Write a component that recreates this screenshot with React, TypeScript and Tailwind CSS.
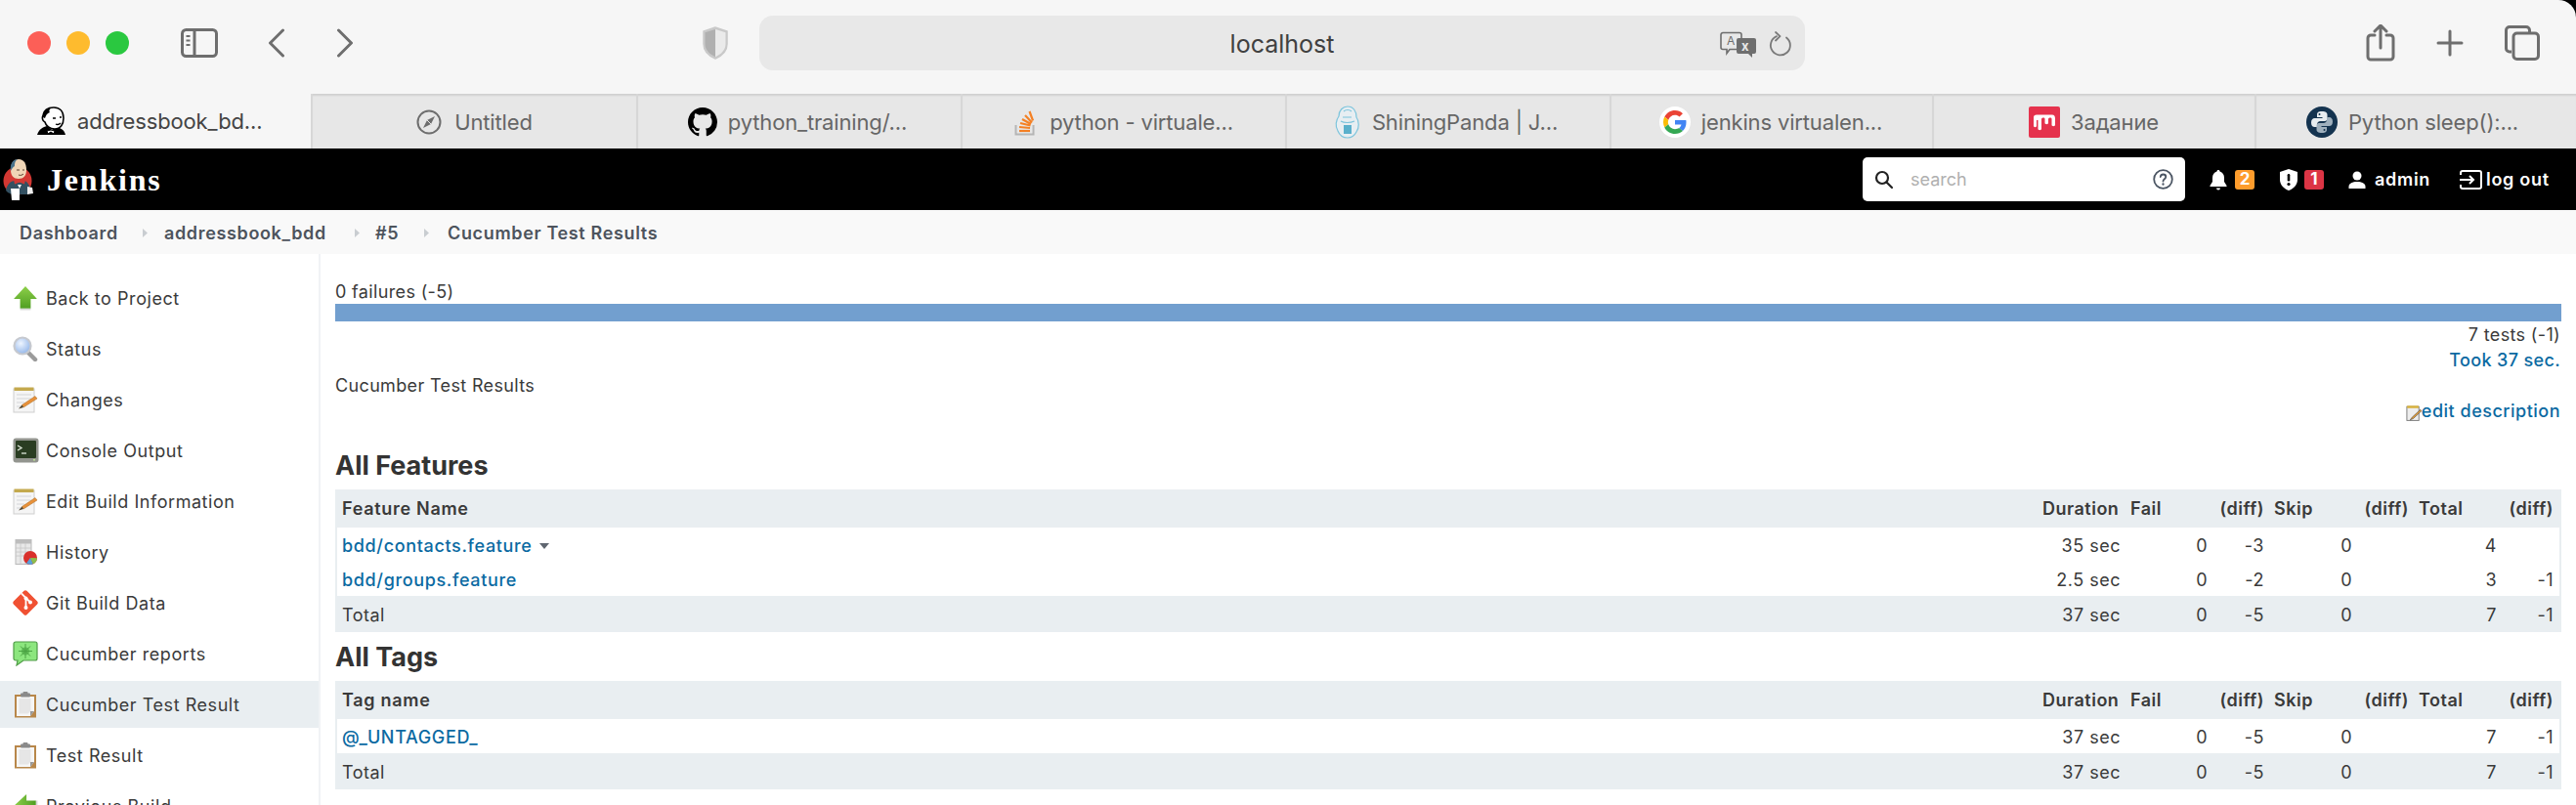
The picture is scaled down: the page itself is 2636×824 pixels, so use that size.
import React from "react";

const Lights = () => (
  <div className="flex gap-[16px] ml-[28px]">
    <span className="w-[24px] h-[24px] rounded-full bg-[#fc5f57]" />
    <span className="w-[24px] h-[24px] rounded-full bg-[#febb2e]" />
    <span className="w-[24px] h-[24px] rounded-full bg-[#2ac840]" />
  </div>
);

const SidebarToggle = () => (
  <svg width="38" height="30" viewBox="0 0 38 30" fill="none" stroke="#6e6e6e" strokeWidth="3" className="ml-[53px]">
    <rect x="1.5" y="1.5" width="35" height="27" rx="4" />
    <path d="M14 2v26" />
    <path d="M5.5 8h4M5.5 12.5h4M5.5 17h4" strokeWidth="2" />
  </svg>
);

const Chevron = ({ dir, cls }: { dir: "l" | "r"; cls: string }) => (
  <svg width="18" height="30" viewBox="0 0 18 30" fill="none" stroke="#6e6e6e" strokeWidth="3" strokeLinecap="round" strokeLinejoin="round" className={cls}>
    <path d={dir === "l" ? "M15.5 2 2.5 15l13 13" : "M2.5 2l13 13-13 13"} />
  </svg>
);

const Shield = () => (
  <svg width="28" height="34" viewBox="0 0 28 34" className="ml-[356px]">
    <path d="M14 1 2 5v13c0 7 5 12 12 15 7-3 12-8 12-15V5z" fill="#c9c9c9" stroke="#c9c9c9" strokeWidth="1.5" />
    <path d="M14 3 3.5 6.2V18c0 6 4.5 10.5 10.5 13.2z" fill="#b0b0b0" />
    <path d="M14 3 24.5 6.2V18c0 6-4.5 10.5-10.5 13.2z" fill="#eaeaea" />
  </svg>
);

const Translate = () => (
  <svg width="38" height="28" viewBox="0 0 38 28" className="absolute left-[983px] top-[16px]">
    <path d="M3 1.500h17a2 2 0 0 1 2 2v13a2 2 0 0 1-2 2H10l-3 4v-4H3a2 2 0 0 1-2-2v-13a2 2 0 0 1 2-2z" fill="#e8e8e8" stroke="#6e6e6e" strokeWidth="1.600" />
    <text x="7" y="14" fontSize="12" fill="#6e6e6e" fontFamily="Inter, sans-serif">A</text>
    <path d="M19 7h16a2 2 0 0 1 2 2v12a2 2 0 0 1-2 2h-2v4l-4-4h-10a2 2 0 0 1-2-2V9a2 2 0 0 1 2-2z" fill="#6e6e6e" />
    <text x="22" y="20" fontSize="13" fontWeight="700" fill="#e8e8e8" fontFamily="Inter, sans-serif">x</text>
  </svg>
);

const Reload = () => (
  <svg width="24" height="26" viewBox="0 0 24 26" fill="none" stroke="#7a7a7a" strokeWidth="1.800" strokeLinecap="round" strokeLinejoin="round" className="absolute left-[1032px] top-[16px]">
    <path d="M9 5.200A10 10 0 1 0 19 6.500" />
    <path d="M8 1l4.500 4.200L8 9.500" />
  </svg>
);

const ShareIcon = () => (
  <svg width="30" height="38" viewBox="0 0 30 38" fill="none" stroke="#6e6e6e" strokeWidth="3" strokeLinecap="round" strokeLinejoin="round" className="ml-[574px]">
    <path d="M9 11H5a3 3 0 0 0-3 3v19a3 3 0 0 0 3 3h20a3 3 0 0 0 3-3V14a3 3 0 0 0-3-3h-4" />
    <path d="M15 24V2M9 7l6-6 6 6" />
  </svg>
);

const PlusIcon = () => (
  <svg width="28" height="28" viewBox="0 0 28 28" stroke="#6e6e6e" strokeWidth="3" strokeLinecap="round" className="ml-[42px]">
    <path d="M14 2v24M2 14h24" />
  </svg>
);

const TabsIcon = () => (
  <svg width="36" height="36" viewBox="0 0 36 36" fill="none" stroke="#6e6e6e" strokeWidth="3" className="ml-[42px]">
    <path d="M7 27H5a3.500 3.500 0 0 1-3.500-3.500V5A3.500 3.500 0 0 1 5 1.500h17A3.500 3.500 0 0 1 25.500 5v2" />
    <rect x="9" y="8" width="25.500" height="26.500" rx="3.500" />
  </svg>
);

const Butler = () => (
  <svg width="30" height="30" viewBox="0 0 30 30">
    <path d="M0 29c2-6 6-8 10-9l5 4 5-3c4 1 8 3 9 8z" fill="#000" />
    <path d="M14 24l-4 1 1 3 3-2 3 2 1-3z" fill="#fff" stroke="#000" />
    <path d="M6 9C7 3 12 1 17 1c6 0 10 4 10 11 0 6-3 11-9 11-5 0-9-3-10-7-3-1-3-5-2-7z" fill="#fff" stroke="#000" strokeWidth="1.600" />
    <path d="M6 11C6 5 9 2 15 1c-3 2-3 4-2 5-3 1-4 3-5 6z" fill="#000" />
    <path d="M16 12h3M23 11h2M19 18c2 1 4 0 5-1" stroke="#000" strokeWidth="1.300" fill="none" />
  </svg>
);

const Compass = () => (
  <svg width="26" height="26" viewBox="0 0 26 26" fill="none">
    <circle cx="13" cy="13" r="11.500" stroke="#6e6e6e" strokeWidth="2" />
    <path d="M19 7l-8 4-4 8 8-4z" fill="#6e6e6e" />
    <path d="M11 11l4 4" stroke="#e7e7e7" strokeWidth="1" />
  </svg>
);

const Github = () => (
  <svg width="30" height="30" viewBox="0 0 16 16" fill="#000">
    <path d="M8 0C3.580 0 0 3.580 0 8c0 3.540 2.290 6.530 5.470 7.590.4.070.55-.17.55-.38 0-.19-.01-.82-.01-1.490-2.010.37-2.530-.49-2.690-.94-.09-.23-.48-.94-.82-1.130-.28-.15-.68-.52-.01-.53.63-.01 1.080.58 1.230.82.720 1.210 1.870.87 2.330.66.070-.52.280-.87.510-1.070-1.780-.2-3.640-.89-3.640-3.950 0-.87.310-1.590.820-2.150-.08-.2-.36-1.020.08-2.120 0 0 .67-.21 2.200.82.640-.18 1.320-.27 2-.27s1.360.09 2 .27c1.530-1.040 2.200-.82 2.200-.82.440 1.100.160 1.920.08 2.120.51.560.82 1.270.82 2.150 0 3.070-1.870 3.750-3.650 3.950.29.25.54.73.54 1.480 0 1.070-.01 1.930-.01 2.200 0 .21.150.46.550.38A8.010 8.010 0 0 0 16 8c0-4.420-3.580-8-8-8z" />
  </svg>
);

const StackOverflow = () => (
  <svg width="22" height="28" viewBox="0 0 22 28" fill="none">
    <path d="M1.500 17v9.500h18V17" stroke="#b5b5b5" strokeWidth="2" />
    <path d="M5 23h11" stroke="#f48024" strokeWidth="2.200" />
    <path d="M5 19l11 1M6 15l10.500 2.500M8 11l9 5M11 7l7 7.500M15.500 3l3.500 9.500" stroke="#f48024" strokeWidth="2.200" />
  </svg>
);

const PandaButler = () => (
  <svg width="26" height="34" viewBox="0 0 26 34" fill="none" stroke="#7cc4dc" strokeWidth="1.200">
    <path d="M13 1c6 0 9 5 9 11 3 4 3 11 0 15-2 4-5 6-9 6s-8-2-10-7C0 21 1 15 4 11 4 5 8 1 13 1z" fill="#e7eef2" />
    <path d="M8 12h9M9 6c2-2 6-2 8 0M6 16c3 2 10 2 14 0" />
    <rect x="9" y="20" width="8" height="9" fill="#5ab0cc" stroke="none" />
  </svg>
);

const GoogleG = () => (
  <svg width="32" height="32" viewBox="0 0 32 32">
    <circle cx="16" cy="16" r="16" fill="#fff" />
    <g transform="translate(4 4) scale(.5)">
      <path fill="#ea4335" d="M24 9.500c3.500 0 6.600 1.200 9.100 3.600l6.800-6.800C35.800 2.400 30.400 0 24 0 14.600 0 6.500 5.400 2.600 13.200l7.900 6.100C12.400 13.700 17.700 9.500 24 9.500z" />
      <path fill="#4285f4" d="M47 24.500c0-1.600-.1-3.100-.4-4.500H24v9h13c-.6 3-2.300 5.500-4.800 7.200l7.700 6c4.500-4.200 7.100-10.300 7.100-17.700z" />
      <path fill="#fbbc05" d="M10.500 28.700c-.5-1.500-.8-3-.8-4.700s.3-3.200.8-4.700l-7.900-6.100C.9 16.500 0 20.100 0 24s.9 7.500 2.600 10.800z" />
      <path fill="#34a853" d="M24 48c6.500 0 11.900-2.100 15.900-5.800l-7.700-6c-2.100 1.400-4.900 2.300-8.200 2.300-6.300 0-11.600-4.200-13.500-9.800l-7.900 6.100C6.500 42.600 14.600 48 24 48z" />
    </g>
  </svg>
);

const MoodleM = () => (
  <svg width="32" height="32" viewBox="0 0 32 32">
    <rect width="32" height="32" rx="2" fill="#e5324d" />
    <path d="M5 20V11c0-1.500 1-2.500 3-2.500h16c2 0 3 1.500 3 4V19c0 1.500-3.500 1.500-3.500 0v-6c0-1-.5-1.500-1.500-1.500s-2 .5-2 1.500v4c0 1.500-3.500 1.500-3.500 0v-4c0-1-.5-1.500-1.500-1.500s-2 .5-2 1.500v10c0 1.500-3.500 1.500-3.500 0V14H8v6c0 1.500-3 1.500-3 0z" fill="#fff" />
  </svg>
);

const PythonLogo = () => (
  <svg width="32" height="32" viewBox="0 0 32 32">
    <circle cx="16" cy="16" r="16" fill="#14334f" />
    <path d="M16 5c-4 0-5 1.500-5 3.500V11h5.500v1H8.500C6.500 12 5 13.500 5 16.500S6.500 21 8.500 21H11v-2.500c0-2 1.500-3.500 3.500-3.500H19c1.500 0 2.500-1 2.500-2.500V8.500C21.500 6.500 20 5 16 5z" fill="#e8edf0" />
    <path d="M16 27c4 0 5-1.500 5-3.500V21h-5.500v-1h8c2 0 3.500-1.500 3.500-4.500S25.500 11 23.500 11H21v2.500c0 2-1.500 3.500-3.500 3.500H13c-1.500 0-2.500 1-2.500 2.500v4C10.500 25.500 12 27 16 27z" fill="#9fb0bd" />
    <circle cx="13.500" cy="8" r="1" fill="#14334f" />
    <circle cx="18.500" cy="24" r="1" fill="#14334f" />
  </svg>
);

const tabs: { icon: React.ReactNode; label: string; w: string; gap: string; pr: string }[] = [
  { icon: <Compass />, label: "Untitled", w: "w-[333px]", gap: "gap-[13px]", pr: "pr-[0px]" },
  { icon: <Github />, label: "python_training/...", w: "w-[332px]", gap: "gap-[11px]", pr: "pr-[4px]" },
  { icon: <StackOverflow />, label: "python - virtuale...", w: "w-[332px]", gap: "gap-[14px]", pr: "pr-[0px]" },
  { icon: <PandaButler />, label: "ShiningPanda | J...", w: "w-[332px]", gap: "gap-[12px]", pr: "pr-[4px]" },
  { icon: <GoogleG />, label: "jenkins virtualen...", w: "w-[330px]", gap: "gap-[11px]", pr: "pr-[2px]" },
  { icon: <MoodleM />, label: "Задание", w: "w-[330px]", gap: "gap-[11px]", pr: "pr-[1px]" },
  { icon: <PythonLogo />, label: "Python sleep():...", w: "w-[329px]", gap: "gap-[11px]", pr: "pr-[8px]" },
];

const TabBar = () => (
  <div className="flex h-[56px] text-[22px] leading-none tracking-[-0.15px]">
    <div className="w-[318px] bg-[#f6f6f6] flex items-center pl-[38px] gap-[11px] text-[#444]">
      <Butler />
      <span className="whitespace-nowrap">addressbook_bd...</span>
    </div>
    {tabs.map((t) => (
      <div key={t.label} className={`${t.w} ${t.pr} bg-[#e7e7e7] border-l-2 border-[#d7d7d7] shadow-[inset_0_3px_2px_-1px_#d0d0d0] pt-[2px] flex items-center justify-center ${t.gap} text-[#666]`}>
        {t.icon}
        <span className="whitespace-nowrap">{t.label}</span>
      </div>
    ))}
  </div>
);

const JenkinsLogo = () => (
  <svg width="32" height="44" viewBox="0 0 32 44" className="ml-[3px]">
    <circle cx="15" cy="23" r="14.500" fill="#d33833" />
    <path d="M8 12C8 5 11 1 16 1c6 0 8 5 8 11 0 6-3 9-8 9-5 0-8-3-8-9z" fill="#f0d6b7" />
    <path d="M8 13C7 6 10 1 15 1c-3 2-3 5-3 7-2 1-3 3-4 5z" fill="#49728b" />
    <path d="M14 12h3M20 12h2M16 17c2 1 4 0 5-1" stroke="#5a4030" strokeWidth="1" fill="none" />
    <path d="M3 33c1-6 5-10 9-10l5 2 5-2c3 1 5 4 6 8l-2 6H9l-4-2z" fill="#335061" />
    <path d="M11 22l6 2.500 6-2.500-1 4.500-5-2-5 2z" fill="#d33833" />
    <path d="M8 31h9v12H9z" fill="#fff" />
    <path d="M25 29l5 1 1 6-6 1z" fill="#eee" />
    <path d="M15 27l2 4 2-4z" fill="#fff" />
  </svg>
);

const NavBar = () => (
  <div className="h-[63px] bg-black flex items-center text-white">
    <JenkinsLogo />
    <span className="ml-[13px] [font-family:'Liberation_Serif',serif] font-bold text-[32px] tracking-[1.8px] leading-none w-[120px]">Jenkins</span>
    <div className="ml-[1738px] w-[330px] h-[45px] bg-white rounded-[5px] flex items-center pl-[12px] pr-[12px]">
      <svg width="20" height="20" viewBox="0 0 20 20" fill="none" stroke="#222" strokeWidth="2.200" strokeLinecap="round">
        <circle cx="8" cy="8" r="6" />
        <path d="M12.500 12.500 18 18" />
      </svg>
      <span className="ml-[17px] text-[#b0b0b0] text-[18px] flex-1">search</span>
      <svg width="21" height="21" viewBox="0 0 21 21" fill="none" stroke="#4b5563" strokeWidth="1.800" strokeLinecap="round">
        <circle cx="10.500" cy="10.500" r="9.300" />
        <path d="M7.800 8c.2-1.700 1.300-2.500 2.800-2.500s2.700 1 2.700 2.400c0 2.300-2.800 2.300-2.800 4.600" />
        <path d="M10.500 15.300v.4" strokeWidth="2.200" />
      </svg>
    </div>
    <svg width="18" height="22" viewBox="0 0 18 22" fill="#fff" className="ml-[25px]">
      <path d="M9 1c1 0 1.500.7 1.500 1.500C13.500 3.200 15 6 15 9v4l2.500 4v1H.5v-1L3 13V9c0-3 1.500-5.800 4.500-6.500C7.500 1.700 8 1 9 1z" />
      <path d="M7 19.500h4a2 2 0 0 1-4 0z" />
    </svg>
    <span className="ml-[8px] w-[20px] h-[20px] rounded-[3px] bg-[#fe9c2c] flex items-center justify-center text-[17px] font-bold leading-none">2</span>
    <svg width="20" height="22" viewBox="0 0 20 22" className="ml-[25px]">
      <path d="M10 0l9 3v8c0 5-4 9-9 11-5-2-9-6-9-11V3z" fill="#fff" />
      <rect x="8.700" y="5" width="2.600" height="7.500" rx="1.200" fill="#000" />
      <circle cx="10" cy="15.500" r="1.600" fill="#000" />
    </svg>
    <span className="ml-[6px] w-[20px] h-[20px] rounded-[3px] bg-[#dc3545] flex items-center justify-center text-[17px] font-bold leading-none">1</span>
    <svg width="18" height="18" viewBox="0 0 18 18" fill="#fff" className="ml-[25px]">
      <circle cx="9" cy="5" r="4.500" />
      <path d="M.5 18v-2c0-3.500 4-5 8.500-5s8.500 1.500 8.500 5v2z" />
    </svg>
    <span className="ml-[9px] text-[18px] font-semibold tracking-[0.7px] leading-none w-[55px] whitespace-nowrap">admin</span>
    <svg width="23" height="20" viewBox="0 0 23 20" fill="none" stroke="#fff" strokeWidth="2" className="ml-[32px]">
      <path d="M1 5V3a2 2 0 0 1 2-2h17a2 2 0 0 1 2 2v14a2 2 0 0 1-2 2H3a2 2 0 0 1-2-2v-2" />
      <path d="M0 10h14M10 6l4 4-4 4" />
    </svg>
    <span className="ml-[4px] text-[18px] font-semibold tracking-[0.7px] leading-none whitespace-nowrap">log out</span>
  </div>
);

const Sep = ({ cls }: { cls: string }) => (
  <svg width="5" height="9" viewBox="0 0 5 9" className={cls}>
    <path d="M0 0l5 4.500L0 9z" fill="#c9cdd1" />
  </svg>
);

const Breadcrumb = () => (
  <div className="h-[45px] bg-[#f9f9f9] flex items-center pl-[20px] pt-[2px] text-[18px] font-semibold text-[#4d545d] tracking-[0.65px] leading-none whitespace-nowrap">
    <span className="w-[100px]">Dashboard</span>
    <Sep cls="ml-[26px]" />
    <span className="ml-[17px] w-[169px]">addressbook_bdd</span>
    <Sep cls="ml-[26px]" />
    <span className="ml-[16px] w-[24px]">#5</span>
    <Sep cls="ml-[26px]" />
    <span className="ml-[19px]">Cucumber Test Results</span>
  </div>
);

const ArrowIcon = ({ left }: { left?: boolean }) => (
  <svg width="26" height="26" viewBox="0 0 24 24" className={left ? "-rotate-90" : ""}>
    <defs>
      <linearGradient id="ga" x1="0" y1="0" x2="0" y2="1">
        <stop offset="0" stopColor="#8ed04a" />
        <stop offset="1" stopColor="#4f9e22" />
      </linearGradient>
    </defs>
    <path d="M12 1 23 13h-6v9H7v-9H1z" fill="url(#ga)" />
    <path d="M7 22h10v1.500H7z" fill="#d8d8d8" />
  </svg>
);

const Magnifier = () => (
  <svg width="26" height="26" viewBox="0 0 26 26">
    <defs>
      <radialGradient id="gm" cx=".4" cy=".35" r=".7">
        <stop offset="0" stopColor="#eef5ff" />
        <stop offset="1" stopColor="#8fb3e8" />
      </radialGradient>
    </defs>
    <path d="M15 16l8 8" stroke="#9b9b9b" strokeWidth="4.500" strokeLinecap="round" />
    <circle cx="10" cy="10" r="8.500" fill="url(#gm)" stroke="#c6c9cf" strokeWidth="2.200" />
  </svg>
);

const Notepad = () => (
  <svg width="26" height="27" viewBox="0 0 26 27">
    <rect x="1" y="2" width="21" height="24" fill="#f5f5f5" stroke="#cfcfcf" />
    <rect x="1.500" y="0.500" width="20" height="3.500" fill="#c4a94e" />
    <path d="M4 8h15M4 12h15M4 16h8M4 20h5" stroke="#d3d6d9" strokeWidth="1.100" />
    <path d="M23 9.500 9.500 18.500l1.500 2.500L25 12z" fill="#e8913a" stroke="#a9691f" strokeWidth=".5" />
    <path d="M9.500 18.500 6 22.500l5-1.500z" fill="#50452f" />
  </svg>
);

const ConsoleIcon = () => (
  <svg width="27" height="26" viewBox="0 0 27 26">
    <rect x=".5" y=".5" width="26" height="25" rx="3" fill="#93958f" />
    <rect x="3" y="3" width="21" height="18" rx="1" fill="#2a3d22" />
    <path d="M5 8l4 2.500-4 2.500" stroke="#dfe8da" strokeWidth="1.300" fill="none" />
    <path d="M9 16h5" stroke="#dfe8da" strokeWidth="1.300" />
    <rect x="21" y="22" width="2" height="1.500" fill="#b8e08f" />
  </svg>
);

const HistoryIcon = () => (
  <svg width="26" height="26" viewBox="0 0 26 26">
    <rect x="3" y="0.500" width="16" height="25" fill="#e8e8e8" stroke="#b9b9b9" />
    <rect x="3" y="0.500" width="16" height="4" fill="#bdbdbd" />
    <path d="M3 9h16M3 13h16M3 17h16M8 4v21M13 4v21" stroke="#c7c7c7" strokeWidth=".8" />
    <circle cx="18" cy="19" r="7" fill="#d9302b" />
    <path d="M18 19l-4 5.500a7 7 0 0 0 7 .7z" fill="#5aa0d8" />
    <path d="M18 19l3 6.200a7 7 0 0 0 4-6z" fill="#8abf4d" />
  </svg>
);

const GitIcon = () => (
  <svg width="28" height="28" viewBox="0 0 28 28">
    <rect x="4.400" y="4.400" width="19.200" height="19.200" rx="2" fill="#f05133" transform="rotate(45 14 14)" />
    <path d="M10 4.500 14.500 9v9.500M14.500 9 19 13.500" stroke="#fff" strokeWidth="1.800" fill="none" />
    <circle cx="14.500" cy="9.500" r="2" fill="#fff" />
    <circle cx="14.500" cy="19" r="2" fill="#fff" />
    <circle cx="19" cy="13.500" r="2" fill="#fff" />
  </svg>
);

const CucumberIcon = () => (
  <svg width="26" height="26" viewBox="0 0 26 26">
    <path d="M3 1h20a2 2 0 0 1 2 2v15a2 2 0 0 1-2 2H11l-7 5 1-5H3a2 2 0 0 1-2-2V3a2 2 0 0 1 2-2z" fill="#8ce67e" stroke="#4f9c47" strokeWidth="1.200" />
    <circle cx="13" cy="10.500" r="4" fill="#62bd58" />
    <g stroke="#4aa342" strokeWidth="1">
      <path d="M13 3v15M6 10.500h14M8 5.500l10 10M18 5.500l-10 10" />
    </g>
  </svg>
);

const ClipboardIcon = () => (
  <svg width="24" height="27" viewBox="0 0 24 27">
    <rect x="1" y="3" width="22" height="23.500" fill="#b8874a" />
    <path d="M3 5h18v15l-4 5H3z" fill="#f6f6f6" />
    <path d="M5.500 7h12v13l-3 2.500h-9z" fill="#e6e6e6" />
    <path d="M17 25l4-5h-4z" fill="#999" />
    <rect x="7" y="1.500" width="10" height="4" rx="1" fill="#8a8a8a" />
    <rect x="9.500" y="0" width="5" height="3" rx="1" fill="#8a8a8a" />
  </svg>
);

const SideItem = ({ icon, label, active }: { icon: React.ReactNode; label: string; active?: boolean }) => (
  <div className={`h-[48px] shrink-0 flex items-center pl-[12px] ${active ? "bg-[#e9eef1]" : ""}`}>
    <span className="w-[28px] flex justify-center">{icon}</span>
    <span className="ml-[7px] pt-[2px] whitespace-nowrap">{label}</span>
  </div>
);

const Sidebar = () => (
  <aside className="w-[328px] shrink-0 border-r-2 border-[#f1f3f5] pt-[21px] flex flex-col gap-[4px] text-[18px] leading-none tracking-[0.55px] text-[#3a3a3a]">
    <SideItem icon={<ArrowIcon />} label="Back to Project" />
    <SideItem icon={<Magnifier />} label="Status" />
    <SideItem icon={<Notepad />} label="Changes" />
    <SideItem icon={<ConsoleIcon />} label="Console Output" />
    <SideItem icon={<Notepad />} label="Edit Build Information" />
    <SideItem icon={<HistoryIcon />} label="History" />
    <SideItem icon={<GitIcon />} label="Git Build Data" />
    <SideItem icon={<CucumberIcon />} label="Cucumber reports" />
    <SideItem icon={<ClipboardIcon />} label="Cucumber Test Result" active />
    <SideItem icon={<ClipboardIcon />} label="Test Result" />
    <SideItem icon={<ArrowIcon left />} label="Previous Build" />
  </aside>
);

const widths = [1740, 89, 91, 58, 90, 58, 90, 58];

type Row = { name: React.ReactNode; dur: string; fail: string; fd: string; skip: string; sd: string; total: string; td: string };

const Table = ({ head, rows, total }: { head: string; rows: Row[]; total: Row }) => {
  const cells = (r: Row) => (
    <>
      <td className="pl-[5px] pt-[2px]">{r.name}</td>
      <td className="text-right pr-[4px] pt-[2px]">{r.dur}</td>
      <td className="text-right pr-[6px] pt-[2px]">{r.fail}</td>
      <td className="text-right pr-[6px] pt-[2px]">{r.fd}</td>
      <td className="text-right pr-[6px] pt-[2px]">{r.skip}</td>
      <td className="text-right pr-[6px] pt-[2px]">{r.sd}</td>
      <td className="text-right pr-[6px] pt-[2px]">{r.total}</td>
      <td className="text-right pr-[6px] pt-[2px]">{r.td}</td>
    </>
  );
  return (
    <div className="border-x-2 border-[#e9eef1]">
      <table className="w-full table-fixed border-collapse text-[18px] leading-none tracking-[0.5px] text-[#3a3a3a]">
        <colgroup>
          {widths.map((w, i) => (
            <col key={i} style={{ width: w }} />
          ))}
        </colgroup>
        <thead>
          <tr className="h-[39px] bg-[#e9eef1] font-semibold">
            <th className="text-left pl-[5px] pt-[1px] font-semibold tracking-[0.7px]">{head}</th>
            <th className="text-left pl-[5px] pt-[1px] font-semibold">Duration</th>
            <th className="text-left pl-[6px] pt-[1px] font-semibold">Fail</th>
            <th className="text-right pr-[6px] pt-[1px] font-semibold">(diff)</th>
            <th className="text-left pl-[4px] pt-[1px] font-semibold">Skip</th>
            <th className="text-right pr-[6px] pt-[1px] font-semibold">(diff)</th>
            <th className="text-left pl-[4px] pt-[1px] font-semibold">Total</th>
            <th className="text-right pr-[6px] pt-[1px] font-semibold">(diff)</th>
          </tr>
        </thead>
        <tbody>
          {rows.map((r, i) => (
            <tr key={i} className="h-[35px]">
              {cells(r)}
            </tr>
          ))}
          <tr className="h-[37px] bg-[#e9eef1]">{cells(total)}</tr>
        </tbody>
      </table>
    </div>
  );
};

const Lnk = ({ children }: { children: React.ReactNode }) => <a className="text-[#0b6aa2] font-medium tracking-[0.65px]">{children}</a>;

const Content = () => (
  <main className="flex-1 pl-[15px] pr-[15px] text-[18px] text-[#3a3a3a] tracking-[0.35px]">
    <div className="pt-[28px] leading-[22px]">0 failures (-5)</div>
    <div className="mt-[1px] h-[18px] bg-[#729fcf]" />
    <div className="mt-[3px] leading-[22px] text-right pr-[1px]">7 tests (-1)</div>
    <div className="mt-[4px] leading-[22px] text-right pr-[1px]">
      <a className="text-[#0b6aa2] font-medium">Took 37 sec.</a>
    </div>
    <div className="mt-[4px] leading-[22px]">Cucumber Test Results</div>
    <div className="mt-[4px] leading-[22px] flex justify-end pr-[1px] items-end">
      <svg width="16" height="16" viewBox="0 0 26 26" className="mb-[1px]">
        <rect x="1.500" y="2" width="20" height="23" fill="#eee" stroke="#777" strokeWidth="1.500" />
        <rect x="2" y="0.500" width="19" height="4" fill="#d8b23e" />
        <path d="M24 7 10 20l-3 4 5-2L26 9z" fill="#e8a13a" stroke="#444" strokeWidth="1" />
      </svg>
      <a className="text-[#0b6aa2] font-medium tracking-[0.5px]">edit description</a>
    </div>
    <h2 className="mt-[29px] text-[27px] font-bold leading-[32px] tracking-normal text-[#333]">All Features</h2>
    <div className="mt-[8px]">
      <Table
        head="Feature Name"
        rows={[
          {
            name: (
              <span className="inline-flex items-center">
                <Lnk>bdd/contacts.feature</Lnk>
                <svg width="10" height="6" viewBox="0 0 10 6" className="ml-[7px]">
                  <path d="M0 0h10L5 6z" fill="#5f6670" />
                </svg>
              </span>
            ),
            dur: "35 sec", fail: "0", fd: "-3", skip: "0", sd: "", total: "4", td: "",
          },
          { name: <Lnk>bdd/groups.feature</Lnk>, dur: "2.5 sec", fail: "0", fd: "-2", skip: "0", sd: "", total: "3", td: "-1" },
        ]}
        total={{ name: "Total", dur: "37 sec", fail: "0", fd: "-5", skip: "0", sd: "", total: "7", td: "-1" }}
      />
    </div>
    <h2 className="mt-[9px] pt-[1px] h-[32px] text-[27px] font-bold leading-[32px] tracking-normal text-[#333]">All Tags</h2>
    <div className="mt-[9px]">
      <Table
        head="Tag name"
        rows={[{ name: <Lnk>@_UNTAGGED_</Lnk>, dur: "37 sec", fail: "0", fd: "-5", skip: "0", sd: "", total: "7", td: "-1" }]}
        total={{ name: "Total", dur: "37 sec", fail: "0", fd: "-5", skip: "0", sd: "", total: "7", td: "-1" }}
      />
    </div>
  </main>
);

export default function App() {
  return (
    <div className="w-[2636px] h-[824px] overflow-hidden bg-black [font-family:Inter,'Noto_Sans',sans-serif]">
      <div className="h-[96px] bg-[#f6f6f6] rounded-tr-[18px] flex items-center pb-[8px]">
        <Lights />
        <SidebarToggle />
        <Chevron dir="l" cls="ml-[51px]" />
        <Chevron dir="r" cls="ml-[52px]" />
        <Shield />
        <div className="relative ml-[31px] w-[1070px] h-[56px] rounded-[14px] bg-[#e8e8e8] pt-[3px] flex items-center justify-center text-[25px] text-[#404040]">
          localhost
          <Translate />
          <Reload />
        </div>
        <ShareIcon />
        <PlusIcon />
        <TabsIcon />
      </div>
      <TabBar />
      <NavBar />
      <Breadcrumb />
      <div className="flex h-[564px] bg-white">
        <Sidebar />
        <Content />
      </div>
    </div>
  );
}
